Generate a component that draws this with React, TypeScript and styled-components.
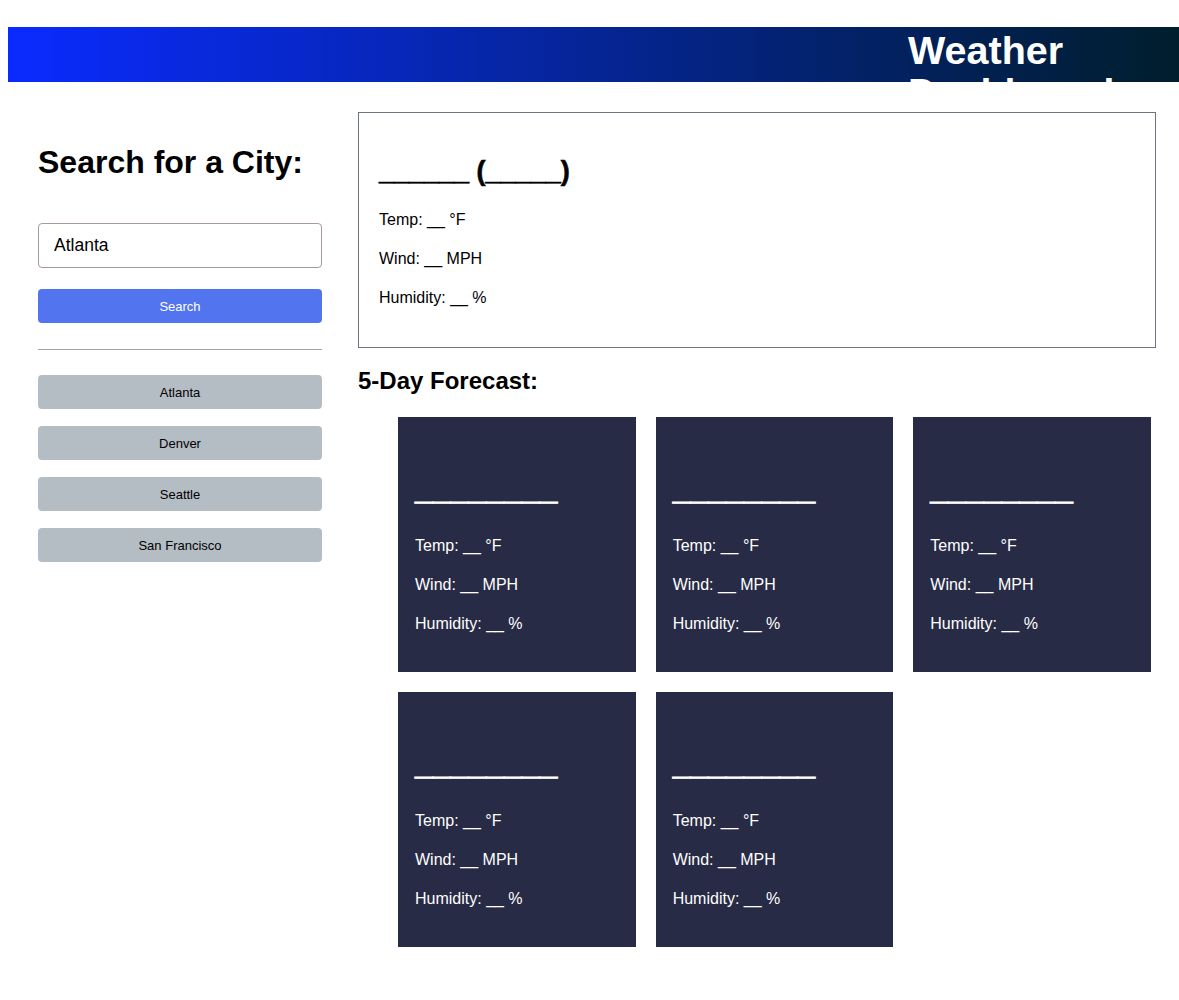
import React from "react";
import styled, { createGlobalStyle } from "styled-components";

const GlobalStyle = createGlobalStyle`
  html, body {
    margin: 0;
    padding: 0;
    background: #ffffff;
  }
  body {
    font-family: "Liberation Sans", Arial, Helvetica, sans-serif;
    font-size: 16px;
    color: #000000;
  }
  * { box-sizing: border-box; }
`;

const Page = styled.div`
  padding: 27px 0 40px 8px;
`;

const Header = styled.header`
  height: 55px;
  display: flex;
  justify-content: flex-end;
  align-items: flex-start;
  background: linear-gradient(90deg, #0a2bff 0%, #001e2c 100%);
  color: #ffffff;
`;

const Title = styled.h1`
  width: 250px;
  margin: 1.5px 21px 0 0;
  font-size: 39.5px;
  line-height: 42px;
  font-weight: 700;
`;

const Main = styled.main`
  display: flex;
  gap: 36px;
  padding: 30px 23px 0 30px;
`;

const Sidebar = styled.aside`
  width: 284px;
  flex: none;
  display: flex;
  flex-direction: column;
`;

const SidebarTitle = styled.h2`
  margin: 31.6px 0 0;
  font-size: 32px;
  font-weight: 700;
`;

const SearchInput = styled.input`
  margin-top: 42.6px;
  width: 100%;
  height: 45px;
  padding: 0 15px;
  border: 1px solid #a69a9a;
  border-radius: 4px;
  font-family: "Liberation Sans", Arial, sans-serif;
  font-size: 17.5px;
  color: #000;
  outline: none;
`;

const Button = styled.button<{ $variant: "primary" | "city" }>`
  width: 100%;
  height: 34px;
  border: none;
  border-radius: 4px;
  font-family: "Liberation Sans", Arial, sans-serif;
  font-size: 13px;
  cursor: pointer;
  background: ${(p) => (p.$variant === "primary" ? "#5274ef" : "#b4bcc4")};
  color: ${(p) => (p.$variant === "primary" ? "#ffffff" : "#000000")};
`;

const SearchButton = styled(Button)`
  margin-top: 21px;
`;

const Divider = styled.hr`
  margin: 26px 0 0;
  height: 0;
  border: 0;
  border-top: 1px solid #a3a3a3;
`;

const CityList = styled.div`
  margin-top: 25px;
  display: flex;
  flex-direction: column;
  gap: 17px;
`;

const Content = styled.section`
  flex: 1;
  min-width: 0;
`;

const CurrentCard = styled.div`
  border: 1px solid #6c757d;
  padding: 20px 20px 22px;
`;

const CurrentTitle = styled.h2`
  margin: 23px 0 20.6px;
  font-size: 27px;
  font-weight: 700;
  -webkit-text-stroke: 0.6px currentColor;
`;

const Stat = styled.p`
  margin: 16px 0;
  font-size: 16px;
  line-height: 23px;
`;

const ForecastTitle = styled.h3`
  margin: 19px 0 22.4px;
  font-size: 24px;
  font-weight: 700;
`;

const ForecastGrid = styled.div`
  display: grid;
  grid-template-columns: repeat(3, 237.67px);
  gap: 20px;
  padding-left: 40px;
`;

const ForecastCard = styled.div`
  background: #272b45;
  color: #ffffff;
  padding: 16px 17px 21px;
`;

const ForecastDate = styled.h4`
  margin: 37px 0 27px;
  font-size: 32px;
  font-weight: 700;
  -webkit-text-stroke: 1px currentColor;
`;

const cities = ["Atlanta", "Denver", "Seattle", "San Francisco"];

const Stats: React.FC = () => (
  <>
    <Stat>Temp: __ °F</Stat>
    <Stat>Wind: __ MPH</Stat>
    <Stat>Humidity: __ %</Stat>
  </>
);

export default function App() {
  return (
    <>
      <GlobalStyle />
      <Page>
        <Header>
          <Title>Weather Dashboard</Title>
        </Header>
        <Main>
          <Sidebar>
            <SidebarTitle>Search for a City:</SidebarTitle>
            <SearchInput defaultValue="Atlanta" />
            <SearchButton $variant="primary">Search</SearchButton>
            <Divider />
            <CityList>
              {cities.map((c) => (
                <Button key={c} $variant="city">
                  {c}
                </Button>
              ))}
            </CityList>
          </Sidebar>
          <Content>
            <CurrentCard>
              <CurrentTitle>______ (_____)</CurrentTitle>
              <Stats />
            </CurrentCard>
            <ForecastTitle>5-Day Forecast:</ForecastTitle>
            <ForecastGrid>
              {[0, 1, 2, 3, 4].map((i) => (
                <ForecastCard key={i}>
                  <ForecastDate>________</ForecastDate>
                  <Stats />
                </ForecastCard>
              ))}
            </ForecastGrid>
          </Content>
        </Main>
      </Page>
    </>
  );
}
